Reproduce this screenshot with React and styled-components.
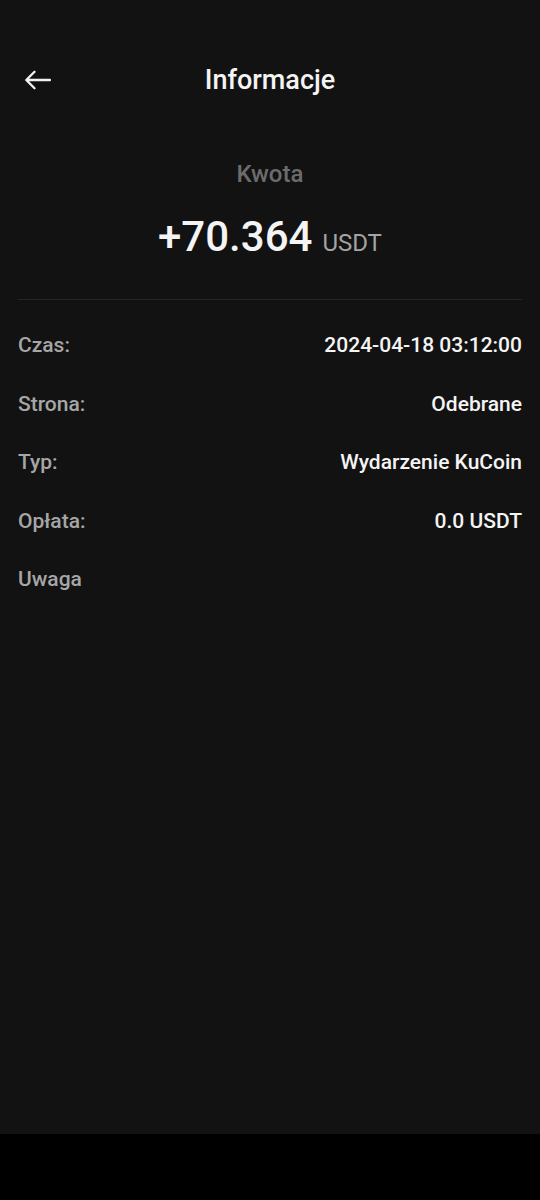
import React from 'react';
import styled, { createGlobalStyle } from 'styled-components';

const GlobalStyle = createGlobalStyle`
  html, body {
    margin: 0;
    padding: 0;
    background: #000;
  }
  body {
    font-family: Roboto, 'Liberation Sans', sans-serif;
  }
`;

const rows = [
  { label: 'Czas:', value: '2024-04-18 03:12:00' },
  { label: 'Strona:', value: 'Odebrane' },
  { label: 'Typ:', value: 'Wydarzenie KuCoin' },
  { label: 'Opłata:', value: '0.0 USDT' },
  { label: 'Uwaga', value: '' },
];

const BackArrow = () => (
  <svg width="27" height="21" viewBox="0 0 27 21" fill="none">
    <path
      d="M26 10.5H2.5M10.5 2.3L2.3 10.5L10.5 18.7"
      stroke="#f2f2f2"
      strokeWidth="2.3"
      strokeLinecap="round"
      strokeLinejoin="round"
    />
  </svg>
);

const App = () => (
  <>
    <GlobalStyle />
    <Screen>
      <Main>
        <Header>
          <BackButton aria-label="Wstecz">
            <BackArrow />
          </BackButton>
          <Title>Informacje</Title>
        </Header>
        <AmountBlock>
          <AmountLabel>Kwota</AmountLabel>
          <AmountLine>
            <AmountValue>+70.364</AmountValue>
            <AmountUnit>USDT</AmountUnit>
          </AmountLine>
        </AmountBlock>
        <Divider />
        <DetailList>
          {rows.map((row) => (
            <Row key={row.label}>
              <Label>{row.label}</Label>
              <Value>{row.value}</Value>
            </Row>
          ))}
        </DetailList>
      </Main>
      <NavBar />
    </Screen>
  </>
);

export default App;

const Screen = styled.div`
  width: 540px;
  height: 1200px;
  display: flex;
  flex-direction: column;
  background: #000;
`;

const Main = styled.main`
  height: 1134px;
  background: #121212;
  padding: 40px 18px 0;
  box-sizing: border-box;
`;

const Header = styled.header`
  position: relative;
  height: 80px;
  display: flex;
  align-items: center;
  justify-content: center;
`;

const BackButton = styled.button`
  position: absolute;
  left: 6px;
  top: 50%;
  transform: translateY(-50%);
  background: none;
  border: none;
  padding: 0;
  display: flex;
  cursor: pointer;
`;

const Title = styled.h1`
  margin: 0;
  font-size: 27px;
  font-weight: 500;
  color: #f4f4f4;
  line-height: 30px;
`;

const AmountBlock = styled.section`
  display: flex;
  flex-direction: column;
  align-items: center;
  padding-top: 39px;
`;

const AmountLabel = styled.div`
  font-size: 24px;
  font-weight: 500;
  line-height: 30px;
  color: #6c6c6c;
`;

const AmountLine = styled.div`
  display: flex;
  align-items: baseline;
  gap: 10px;
  margin-top: 23px;
  line-height: 50px;
`;

const AmountValue = styled.span`
  font-size: 42px;
  font-weight: 500;
  color: #f4f4f4;
`;

const AmountUnit = styled.span`
  font-size: 24px;
  color: #a3a3a3;
`;

const Divider = styled.hr`
  margin: 31px 0 0;
  border: none;
  height: 1px;
  background: #262626;
`;

const DetailList = styled.dl`
  margin: 16px 0 0;
  display: flex;
  flex-direction: column;
`;

const Row = styled.div`
  height: 58.5px;
  display: flex;
  align-items: center;
  justify-content: space-between;
  font-size: 21px;
  font-weight: 500;
  line-height: 24px;
`;

const Label = styled.dt`
  color: #a6a6a6;
`;

const Value = styled.dd`
  margin: 0;
  color: #f4f4f4;
`;

const NavBar = styled.div`
  flex: 1;
  background: #000;
`;
